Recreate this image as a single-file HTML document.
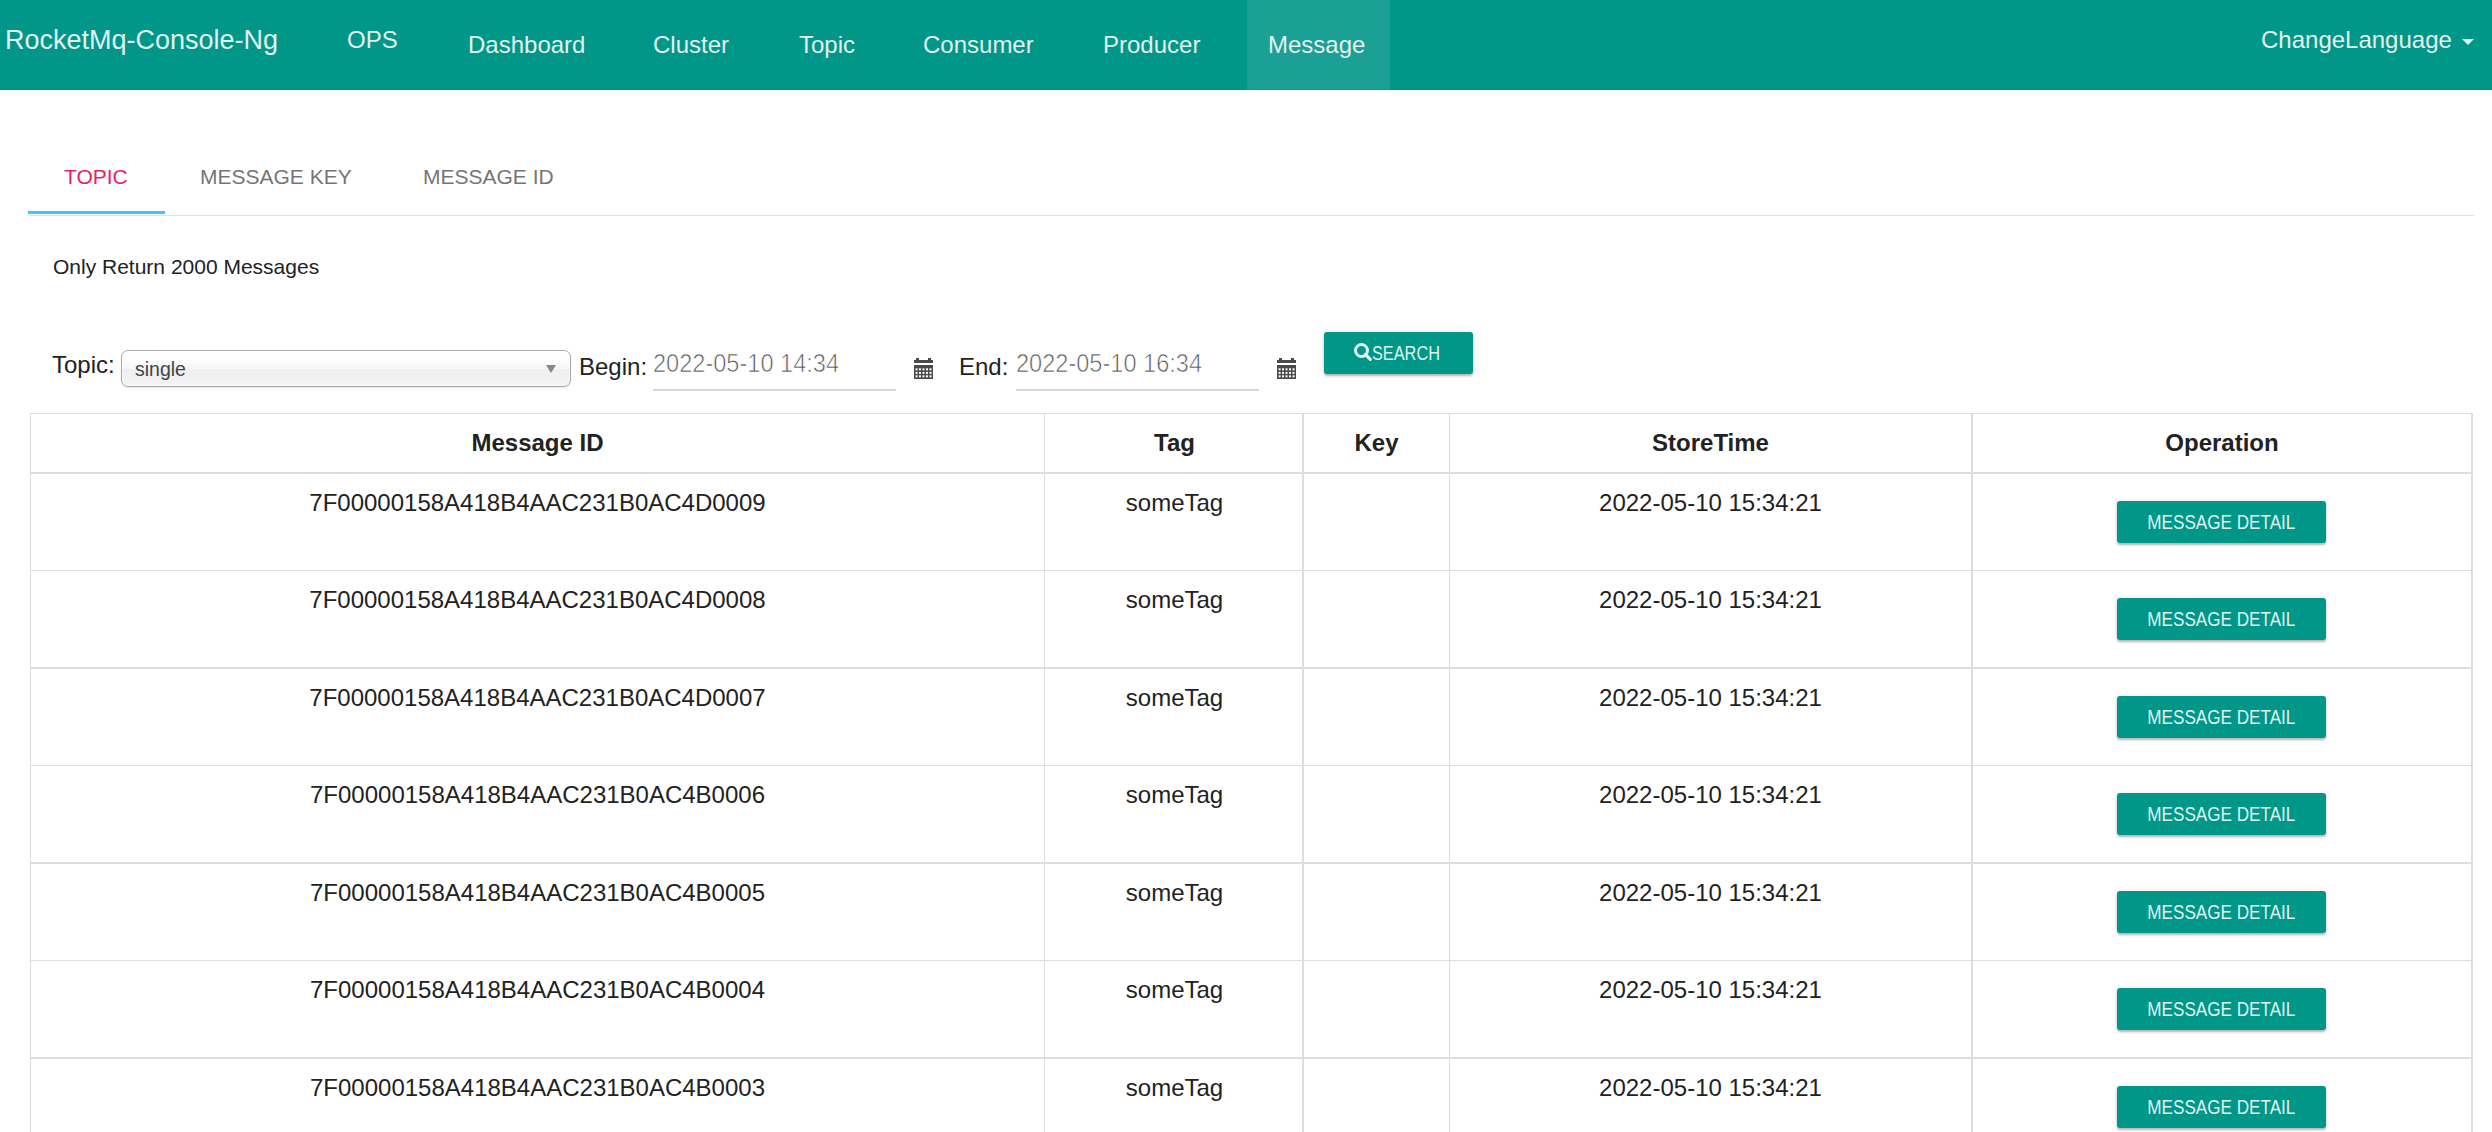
<!DOCTYPE html>
<html>
<head>
<meta charset="utf-8">
<style>
html,body{margin:0;padding:0;background:#fff;}
body{width:2492px;height:1132px;overflow:hidden;position:relative;font-family:"Liberation Sans",sans-serif;color:#333;}
.a{position:absolute;white-space:nowrap;line-height:1;}
#nav{position:absolute;left:0;top:0;width:2492px;height:90px;background:#009688;}
#act{position:absolute;left:1247px;top:0;width:143px;height:90px;background:#1aa094;}
.nv{color:#e3f1ef;font-size:24px;}
.caret{position:absolute;width:0;height:0;border-left:6px solid transparent;border-right:6px solid transparent;border-top:6px solid #e3f1ef;}
.tab{font-size:21px;color:#757575;}
.lbl{font-size:24px;color:#222;}
.date{font-size:26px;color:#555;transform-origin:0 0;transform:scaleX(0.906);-webkit-text-stroke:0.7px #fff;}
.uline{position:absolute;height:2px;background:#d6d6d6;}
.btn{position:absolute;background:#009688;border-radius:3px;box-shadow:0 1px 5px rgba(0,0,0,0.12),0 2px 2px rgba(0,0,0,0.22);}
.bt{font-size:19.5px;color:#dff3f0;transform-origin:0 0;}
.hl{position:absolute;background:#ddd;}
.th{font-size:24px;font-weight:bold;color:#222;}
.td{font-size:24px;color:#222;}
</style>
</head>
<body>
<div id="nav">
  <div id="act"></div>
  <div style="position:absolute;left:0;top:89px;width:2492px;height:1px;background:rgba(0,0,0,0.06);"></div>
  <div class="a nv" id="brand" style="left:5px;top:27px;font-size:27px;">RocketMq-Console-Ng</div>
  <div class="a nv" id="n_ops" style="left:347px;top:28px;">OPS</div>
  <div class="a nv" id="n_dash" style="left:468px;top:33px;">Dashboard</div>
  <div class="a nv" id="n_clu" style="left:653px;top:33px;">Cluster</div>
  <div class="a nv" id="n_top" style="left:799px;top:33px;">Topic</div>
  <div class="a nv" id="n_con" style="left:923px;top:33px;">Consumer</div>
  <div class="a nv" id="n_pro" style="left:1103px;top:33px;">Producer</div>
  <div class="a nv" id="n_msg" style="left:1268px;top:33px;">Message</div>
  <div class="a nv" id="n_lang" style="left:2261px;top:28px;">ChangeLanguage</div>
  <div class="caret" style="left:2462px;top:39px;"></div>
</div>

<!-- tabs -->
<div class="a tab" id="t1" style="left:64px;top:166px;color:#e91e63;">TOPIC</div>
<div class="a tab" id="t2" style="left:200px;top:166px;">MESSAGE KEY</div>
<div class="a tab" id="t3" style="left:423px;top:166px;">MESSAGE ID</div>
<div style="position:absolute;left:28px;top:215px;width:2446px;height:1px;background:#e0e0e0;"></div>
<div style="position:absolute;left:28px;top:211px;width:137px;height:3px;background:#40c4ff;"></div>

<div class="a" id="only" style="left:53px;top:256px;font-size:21px;color:#222;">Only Return 2000 Messages</div>

<!-- filter row -->
<div class="a lbl" id="l_topic" style="left:52px;top:353px;">Topic:</div>
<div id="sel" style="position:absolute;left:121px;top:350px;width:448px;height:35px;border:1px solid #aaa;border-radius:7px;background:linear-gradient(#fff 20%,#f6f6f6 50%,#eee 52%,#f4f4f4 100%);box-shadow:0 0 3px #fff inset,0 1px 2px rgba(0,0,0,0.1);"></div>
<div class="a" id="single" style="left:135px;top:360px;font-size:19.5px;color:#444;">single</div>
<div class="caret" style="left:546px;top:365px;border-left-width:5px;border-right-width:5px;border-top:8px solid #888;"></div>

<div class="a lbl" id="l_begin" style="left:579px;top:355px;">Begin:</div>
<div class="a date" id="d1" style="left:653px;top:350px;">2022-05-10 14:34</div>
<div class="uline" style="left:653px;top:389px;width:243px;"></div>
<svg class="a" style="left:914px;top:358px;" width="19" height="21" viewBox="0 0 19 21">
  <g fill="#4a4a4a">
    <rect x="2" y="0" width="3" height="2"/><rect x="14" y="0" width="3" height="2"/>
    <rect x="0" y="2" width="19" height="3"/>
    <rect x="0" y="7" width="19" height="14"/>
  </g>
  <g fill="#fff"><rect x="1.6" y="10.3" width="2" height="2"/><rect x="5" y="10.3" width="2" height="2"/><rect x="8.5" y="10.3" width="2" height="2"/><rect x="12" y="10.3" width="2" height="2"/><rect x="15.5" y="10.3" width="2" height="2"/><rect x="1.6" y="13.9" width="2" height="2"/><rect x="5" y="13.9" width="2" height="2"/><rect x="8.5" y="13.9" width="2" height="2"/><rect x="12" y="13.9" width="2" height="2"/><rect x="15.5" y="13.9" width="2" height="2"/><rect x="1.6" y="17.3" width="2" height="2"/><rect x="5" y="17.3" width="2" height="2"/><rect x="8.5" y="17.3" width="2" height="2"/><rect x="12" y="17.3" width="2" height="2"/><rect x="15.5" y="17.3" width="2" height="2"/></g>
</svg>

<div class="a lbl" id="l_end" style="left:959px;top:355px;">End:</div>
<div class="a date" id="d2" style="left:1016px;top:350px;">2022-05-10 16:34</div>
<div class="uline" style="left:1016px;top:389px;width:243px;"></div>
<svg class="a" style="left:1277px;top:358px;" width="19" height="21" viewBox="0 0 19 21">
  <g fill="#4a4a4a">
    <rect x="2" y="0" width="3" height="2"/><rect x="14" y="0" width="3" height="2"/>
    <rect x="0" y="2" width="19" height="3"/>
    <rect x="0" y="7" width="19" height="14"/>
  </g>
  <g fill="#fff"><rect x="1.6" y="10.3" width="2" height="2"/><rect x="5" y="10.3" width="2" height="2"/><rect x="8.5" y="10.3" width="2" height="2"/><rect x="12" y="10.3" width="2" height="2"/><rect x="15.5" y="10.3" width="2" height="2"/><rect x="1.6" y="13.9" width="2" height="2"/><rect x="5" y="13.9" width="2" height="2"/><rect x="8.5" y="13.9" width="2" height="2"/><rect x="12" y="13.9" width="2" height="2"/><rect x="15.5" y="13.9" width="2" height="2"/><rect x="1.6" y="17.3" width="2" height="2"/><rect x="5" y="17.3" width="2" height="2"/><rect x="8.5" y="17.3" width="2" height="2"/><rect x="12" y="17.3" width="2" height="2"/><rect x="15.5" y="17.3" width="2" height="2"/></g>
</svg>

<div class="btn" style="left:1324px;top:332px;width:149px;height:42px;"></div>
<svg class="a" style="left:1354px;top:343px;" width="19" height="19" viewBox="0 0 19 19">
  <circle cx="7.5" cy="7.5" r="6" fill="none" stroke="#dff3f0" stroke-width="3"/>
  <line x1="11.5" y1="11.5" x2="16.3" y2="16.3" stroke="#dff3f0" stroke-width="3.2" stroke-linecap="round"/>
</svg>
<div class="a bt" id="search" style="left:1372px;top:344px;transform:scaleX(0.836);">SEARCH</div>

<!-- table -->
<div id="tbl">
<div class="hl" style="left:30px;top:413px;width:2443px;height:1px;"></div>
<div class="hl" style="left:30px;top:472px;width:2443px;height:2px;"></div>
<div class="hl" style="left:30px;top:570px;width:2443px;height:1px;"></div>
<div class="hl" style="left:30px;top:667px;width:2443px;height:2px;"></div>
<div class="hl" style="left:30px;top:765px;width:2443px;height:1px;"></div>
<div class="hl" style="left:30px;top:862px;width:2443px;height:2px;"></div>
<div class="hl" style="left:30px;top:960px;width:2443px;height:1px;"></div>
<div class="hl" style="left:30px;top:1057px;width:2443px;height:2px;"></div>
<div class="hl" style="left:30px;top:413px;width:1px;height:719px;"></div>
<div class="hl" style="left:1044px;top:413px;width:1px;height:719px;"></div>
<div class="hl" style="left:1302px;top:413px;width:2px;height:719px;"></div>
<div class="hl" style="left:1449px;top:413px;width:1px;height:719px;"></div>
<div class="hl" style="left:1971px;top:413px;width:2px;height:719px;"></div>
<div class="hl" style="left:2471px;top:413px;width:2px;height:719px;"></div>
<div class="a th" style="left:31px;width:1013px;top:431px;text-align:center;">Message ID</div>
<div class="a th" style="left:1046px;width:257px;top:431px;text-align:center;">Tag</div>
<div class="a th" style="left:1304px;width:145px;top:431px;text-align:center;">Key</div>
<div class="a th" style="left:1450px;width:521px;top:431px;text-align:center;">StoreTime</div>
<div class="a th" style="left:1973px;width:498px;top:431px;text-align:center;">Operation</div>
<div class="a td" style="left:31px;width:1013px;top:491px;text-align:center;">7F00000158A418B4AAC231B0AC4D0009</div>
<div class="a td" style="left:1046px;width:257px;top:491px;text-align:center;">someTag</div>
<div class="a td" style="left:1450px;width:521px;top:491px;text-align:center;">2022-05-10 15:34:21</div>
<div class="btn" style="left:2117px;top:501px;width:209px;height:42px;"></div>
<div class="a bt mdt" style="left:2117px;width:209px;top:512.5px;text-align:center;"><span style="display:inline-block;transform:scaleX(0.878);">MESSAGE DETAIL</span></div>
<div class="a td" style="left:31px;width:1013px;top:588px;text-align:center;">7F00000158A418B4AAC231B0AC4D0008</div>
<div class="a td" style="left:1046px;width:257px;top:588px;text-align:center;">someTag</div>
<div class="a td" style="left:1450px;width:521px;top:588px;text-align:center;">2022-05-10 15:34:21</div>
<div class="btn" style="left:2117px;top:598px;width:209px;height:42px;"></div>
<div class="a bt mdt" style="left:2117px;width:209px;top:609.5px;text-align:center;"><span style="display:inline-block;transform:scaleX(0.878);">MESSAGE DETAIL</span></div>
<div class="a td" style="left:31px;width:1013px;top:686px;text-align:center;">7F00000158A418B4AAC231B0AC4D0007</div>
<div class="a td" style="left:1046px;width:257px;top:686px;text-align:center;">someTag</div>
<div class="a td" style="left:1450px;width:521px;top:686px;text-align:center;">2022-05-10 15:34:21</div>
<div class="btn" style="left:2117px;top:696px;width:209px;height:42px;"></div>
<div class="a bt mdt" style="left:2117px;width:209px;top:707.5px;text-align:center;"><span style="display:inline-block;transform:scaleX(0.878);">MESSAGE DETAIL</span></div>
<div class="a td" style="left:31px;width:1013px;top:783px;text-align:center;">7F00000158A418B4AAC231B0AC4B0006</div>
<div class="a td" style="left:1046px;width:257px;top:783px;text-align:center;">someTag</div>
<div class="a td" style="left:1450px;width:521px;top:783px;text-align:center;">2022-05-10 15:34:21</div>
<div class="btn" style="left:2117px;top:793px;width:209px;height:42px;"></div>
<div class="a bt mdt" style="left:2117px;width:209px;top:804.5px;text-align:center;"><span style="display:inline-block;transform:scaleX(0.878);">MESSAGE DETAIL</span></div>
<div class="a td" style="left:31px;width:1013px;top:881px;text-align:center;">7F00000158A418B4AAC231B0AC4B0005</div>
<div class="a td" style="left:1046px;width:257px;top:881px;text-align:center;">someTag</div>
<div class="a td" style="left:1450px;width:521px;top:881px;text-align:center;">2022-05-10 15:34:21</div>
<div class="btn" style="left:2117px;top:891px;width:209px;height:42px;"></div>
<div class="a bt mdt" style="left:2117px;width:209px;top:902.5px;text-align:center;"><span style="display:inline-block;transform:scaleX(0.878);">MESSAGE DETAIL</span></div>
<div class="a td" style="left:31px;width:1013px;top:978px;text-align:center;">7F00000158A418B4AAC231B0AC4B0004</div>
<div class="a td" style="left:1046px;width:257px;top:978px;text-align:center;">someTag</div>
<div class="a td" style="left:1450px;width:521px;top:978px;text-align:center;">2022-05-10 15:34:21</div>
<div class="btn" style="left:2117px;top:988px;width:209px;height:42px;"></div>
<div class="a bt mdt" style="left:2117px;width:209px;top:999.5px;text-align:center;"><span style="display:inline-block;transform:scaleX(0.878);">MESSAGE DETAIL</span></div>
<div class="a td" style="left:31px;width:1013px;top:1076px;text-align:center;">7F00000158A418B4AAC231B0AC4B0003</div>
<div class="a td" style="left:1046px;width:257px;top:1076px;text-align:center;">someTag</div>
<div class="a td" style="left:1450px;width:521px;top:1076px;text-align:center;">2022-05-10 15:34:21</div>
<div class="btn" style="left:2117px;top:1086px;width:209px;height:42px;"></div>
<div class="a bt mdt" style="left:2117px;width:209px;top:1097.5px;text-align:center;"><span style="display:inline-block;transform:scaleX(0.878);">MESSAGE DETAIL</span></div>
</div>
</body>
</html>
